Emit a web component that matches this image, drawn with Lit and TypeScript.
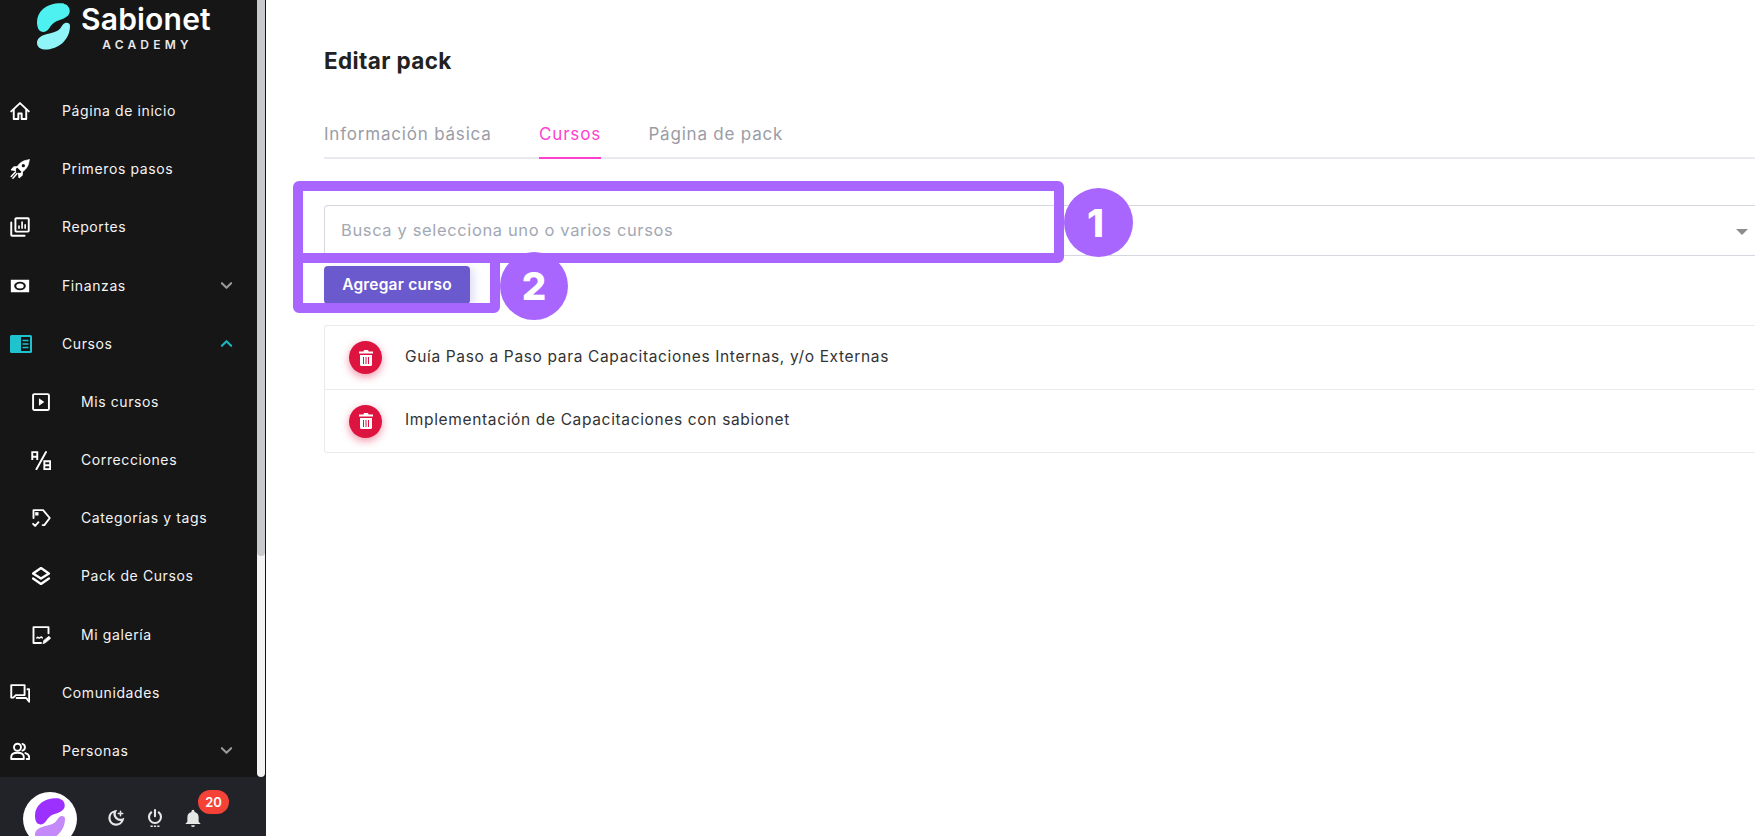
import { LitElement, html, css, svg } from "lit";
import { customElement } from "lit/decorators.js";

const ic = (c: unknown) => html`<svg class="ic" viewBox="0 0 24 24" fill="none" stroke="currentColor" stroke-width="2.3" stroke-linejoin="round" stroke-linecap="round">${c}</svg>`;

const icons: Record<string, unknown> = {
  home: svg`<path d="M1.500 12.500 12 2.500l10.500 10"/><path d="M4.500 10v11.500h5.500v-6.500h4v6.500h5.500V10"/>`,
  rocket: svg`<path d="M23 1c-6.500.5-11 3-14.500 8.500l6 6C20 12 22.500 7.500 23 1z" fill="currentColor" stroke-width="1"/><circle cx="16" cy="8" r="2" fill="#151516" stroke="none"/><path d="M8.500 9.500H5l-3 3.500 4.500.5M14.500 15.500V19l-3.500 3-.5-4.500" stroke-width="1.800" fill="currentColor"/><path d="M6.500 15.500 1.500 21M8.500 17.500 3.500 23" stroke-width="1.800"/>`,
  report: svg`<rect x="6.500" y="1.500" width="16" height="16" rx="1"/><path d="M1.500 6.500v15a1 1 0 0 0 1 1h15"/><path d="M10.800 13.500v-2.500M14.500 13.500V6M18.200 13.500V9.500" stroke-width="2"/>`,
  money: svg`<rect x="1" y="4.500" width="22" height="15" fill="currentColor" stroke="none"/><ellipse cx="12" cy="12" rx="7" ry="5" fill="#151516" stroke="none"/><ellipse cx="12" cy="12" rx="4.500" ry="3" fill="currentColor" stroke="none"/>`,
  play: svg`<rect x="2.500" y="2.500" width="19" height="19" rx="1.500"/><path d="M9.500 7.500l6.500 4.500-6.500 4.500z" fill="currentColor" stroke="none"/>`,
  ab: svg`<path d="M18 2.500 6.500 23" stroke-width="2.300"/><path d="M1.500 12V2.500h6V12M1.500 8h6" stroke-width="2.300" stroke-linejoin="miter" stroke-linecap="butt"/><path d="M16 23v-9.500h7V23zM16 18.200h7" stroke-width="2.300" stroke-linejoin="miter" stroke-linecap="butt"/>`,
  tag: svg`<path d="M3 12V2.500h11.500l8 9.500-6.500 8.500h-2"/><rect x="5" y="5" width="4" height="4" fill="currentColor" stroke="none"/><path d="M2.500 19l2.500 2.500 4-4.500"/>`,
  layers: svg`<path d="M12 2.500 2.500 9l9.500 6 9.500-6z" stroke-width="2.800"/><path d="M2.500 15l9.500 6.500 9.500-6.500" stroke-width="2.800"/>`,
  gallery: svg`<path d="M21 10V2.500H3v19h9"/><path d="M7 15.500c2-2 2 1 3.500 0s1.500-2 3 0" stroke-width="1.800"/><path d="M14.500 22l1-3.500 6-5 2 2.500-6 5z" fill="currentColor" stroke-width="1"/>`,
  chat: svg`<path d="M1.500 2.500h16v12H7l-3 3H1.500z"/><path d="M21 7.500h2v15l-3.500-4.500H8"/>`,
  people: svg`<circle cx="9" cy="7.500" r="4.200"/><path d="M1.500 21.500V19c0-3 3-5 7.500-5s7.500 2 7.500 5v2.500z"/><path d="M15 3.500a4.200 4.200 0 0 1 0 8M18.500 14.500c2.500.8 4.500 2.300 4.500 5v2h-3"/>`,
};

const items = [
  { l: "Página de inicio", i: "home" },
  { l: "Primeros pasos", i: "rocket" },
  { l: "Reportes", i: "report" },
  { l: "Finanzas", i: "money", c: "down" },
  { l: "Cursos", i: "courses", c: "up" },
  { l: "Mis cursos", i: "play", s: 1 },
  { l: "Correcciones", i: "ab", s: 1 },
  { l: "Categorías y tags", i: "tag", s: 1 },
  { l: "Pack de Cursos", i: "layers", s: 1 },
  { l: "Mi galería", i: "gallery", s: 1 },
  { l: "Comunidades", i: "chat" },
  { l: "Personas", i: "people", c: "down" },
];

const coursesIcon = html`<svg class="ic wide" viewBox="0 0 22 18"><rect width="22" height="18" rx="1.500" fill="#1fc2cf"/><rect x="11" y="2" width="9" height="14" fill="#151516"/><path d="M12.500 5.500h6M12.500 9h6M12.500 12.500h6" stroke="#1fc2cf" stroke-width="1.600"/></svg>`;

const chevron = (dir: string) => html`<svg class="chev ${dir}" viewBox="0 0 14 9" fill="none" stroke="currentColor" stroke-width="2.200" stroke-linecap="round" stroke-linejoin="round"><path d=${dir === "up" ? "M2 7l5-5 5 5" : "M2 2l5 5 5-5"}/></svg>`;

const trash = html`<svg class="trash" viewBox="0 0 14 16" fill="#fff"><path d="M5 0h4l.6 1.500H14V3.500H0V1.500h4.400z"/><path fill-rule="evenodd" d="M1 5h12v9.500a1.500 1.500 0 0 1-1.500 1.500h-9A1.500 1.500 0 0 1 1 14.500zM4 7v7h1V7zm2.500 0v7h1V7zM9 7v7h1V7z" /></svg>`;

@customElement("app-root")
export class AppRoot extends LitElement {
  static styles = css`
    :host { display: flex; width: 1755px; height: 836px; overflow: hidden; background: #fff; font-family: "Inter", "Liberation Sans", sans-serif; color: #2b2b2b; }
    * { box-sizing: border-box; }
    .side { width: 266px; height: 836px; display: flex; flex-direction: column; background: #161617; flex: none; position: relative; }
    .thumb { position: absolute; top: 0; left: 257px; width: 8px; height: 777px; background: #f3f3f3; border-radius: 0 0 4px 4px; overflow: hidden; }
    .thumb::after { content: ""; position: absolute; left: 0; right: 0; top: 0; height: 556px; background: #c8c9cc; border-radius: 0 0 4px 4px; }
    .logo { height: 82px; padding: 3px 0 0 37px; display: flex; gap: 11px; flex: none; }
    .logo svg { width: 33px; height: 47px; flex: none; }
    .brand { color: #fff; display: flex; flex-direction: column; align-items: center; }
    .brand b { font-size: 30px; line-height: 32px; font-weight: 600; letter-spacing: 0.2px; }
    .brand span { font-size: 12px; line-height: 14px; font-weight: 600; letter-spacing: 4.200px; margin-top: 3px; color: #e8e8e8; padding-left: 3px; }
    .menu { flex: 1; min-height: 0; display: flex; flex-direction: column; overflow: hidden; }
    .row { flex: 0 0 58.180px; height: 58.180px; display: flex; align-items: center; padding-left: 10px; color: #f3f3f3; font-size: 14px; letter-spacing: 0.6px; position: relative; }
    .row.sub { padding-left: 31px; }
    .row span { padding-bottom: 1px; }
    .ic { width: 20px; height: 20px; flex: none; margin-right: 32px; color: #fff; }
    .row.sub .ic { margin-right: 30px; }
    .ic.wide { width: 22px; height: 18px; margin-right: 30px; }
    .chev { position: absolute; left: 220px; width: 13px; height: 9px; color: #9a9a9a; }
    .chev.up { color: #17b8c4; }
    .foot { height: 59px; flex: none; background: #212328; position: relative; display: flex; align-items: flex-start; }
    .avatar { position: absolute; left: 23px; top: 15px; width: 54px; height: 54px; border-radius: 50%; background: #fff; display: flex; align-items: center; justify-content: center; }
    .avatar svg { width: 30px; height: 43px; }
    .fi { position: absolute; top: 32px; width: 18px; height: 18px; color: #e6e6e6; }
    .fi.moon { left: 107px; }
    .fi.power { left: 146px; }
    .fi.bell { left: 184px; }
    .badge { position: absolute; left: 198px; top: 13px; width: 31px; height: 24px; border-radius: 12px; background: #f44336; color: #fff; font-size: 13px; font-weight: 600; display: flex; align-items: center; justify-content: center; }
    .main { flex: 1; min-width: 0; padding: 47px 0 0 58px; position: relative; display: flex; flex-direction: column; }
    h1 { margin: 0; font-size: 22.500px; line-height: 28px; font-weight: 700; color: #222; letter-spacing: 0.37px; }
    .tabs { display: flex; gap: 47.500px; margin-top: 37px; border-bottom: 2px solid #e9e9ef; height: 47px; color: #9a9ca5; font-size: 17px; letter-spacing: 0.8px; }
    .tab { height: 47px; padding-top: 10px; line-height: 24px; }
    .tab.on { color: #ff3fcf; border-bottom: 2px solid #ff3fcf; }
    .select { margin-top: 46px; height: 51px; border: 1px solid #d6d6e0; border-right: 0; border-radius: 4px 0 0 4px; display: flex; align-items: center; padding: 0 0 2px 16px; color: #a3a8b3; font-size: 16.500px; letter-spacing: 0.63px; position: relative; }
    .caret { position: absolute; right: 7px; top: 23px; width: 0; height: 0; border: 6px solid transparent; border-top: 6px solid #8c8c8c; border-bottom: 0; }
    .btn { margin-top: 10px; width: 146px; height: 38px; border-radius: 4px; background: #6a5acd; color: #fff; font-size: 15.500px; font-weight: 600; display: flex; align-items: center; justify-content: center; padding-bottom: 1px; box-shadow: 4px 2px 8px rgba(106, 90, 205, .2); letter-spacing: 0.2px; }
    .list { margin-top: 21px; border: 1px solid #ebebeb; border-right: 0; border-radius: 3px 0 0 3px; }
    .item { height: 63px; display: flex; align-items: center; padding-left: 24px; font-size: 15.500px; color: #333; letter-spacing: 0.65px; }
    .item + .item { border-top: 1px solid #ebebeb; }
    .item span.t { padding-bottom: 3px; }
    .del { width: 33px; height: 33px; border-radius: 50%; background: #dd1440; box-shadow: 0 3px 8px rgba(221, 20, 64, .45); display: flex; align-items: center; justify-content: center; margin-right: 23px; flex: none; }
    .trash { width: 14px; height: 16px; }
    .mark { position: absolute; border: 10px solid #a866ff; border-radius: 6px; }
    .m1 { left: 27px; top: 181px; width: 771px; height: 82px; }
    .m2 { left: 27px; top: 253px; width: 207px; height: 60px; }
    .num { position: absolute; border-radius: 50%; background: #a866ff; color: #fff; display: flex; align-items: center; justify-content: center; font-size: 38.500px; font-weight: 800; }
    .n1 { left: 798px; top: 188px; width: 69px; height: 69px; padding-right: 6px; }
    .n2 { left: 234px; top: 252px; width: 68px; height: 68px; }
  `;

  logo(a: string, b: string) {
    return html`<svg viewBox="0 0 33 47"><path fill=${a} d="M27 .5C20-.5 11 1.500 6 6 2 9.500 0 14 0 19c0 4 1 8 4 9.500 3 1.200 6 0 8-3 2-3 4-6 8-7.500 4-1.500 10-3 12-7 2-4-.5-9.500-5-10z"/><path fill=${b} d="M33 23c0 7-3 13-8 17.500-5 4-12 6.500-18 6-4-.3-7-3-7-6.500 0-4 3-6.500 7-8 4-1.500 9-2 13-4 3-1.500 4-4 6-6.500 2-2.500 7-2.500 7 1.500z"/></svg>`;
  }

  render() {
    return html`
      <aside class="side">
        <div class="logo">
          ${this.logo("#4ff0f0", "#8ff5f8")}
          <div class="brand"><b>Sabionet</b><span>ACADEMY</span></div>
        </div>
        <nav class="menu">
          ${items.map((it) => html`
            <div class="row ${it.s ? "sub" : ""}">
              ${it.i === "courses" ? coursesIcon : ic(icons[it.i])}
              <span>${it.l}</span>
              ${it.c ? chevron(it.c) : ""}
            </div>`)}
        </nav>
        <div class="foot">
          <div class="avatar">${this.logo("#9b30ff", "#c58af9")}</div>
          <svg class="fi moon" viewBox="0 0 24 24" fill="none" stroke="currentColor" stroke-width="3" stroke-linecap="round"><path d="M11 3a9 9 0 1 0 10 11 8 8 0 0 1-10-11z"/><path d="M18 3v6M15 6h6" stroke-width="2"/></svg>
          <svg class="fi power" viewBox="0 0 24 24" fill="none" stroke="currentColor" stroke-width="2.800" stroke-linecap="round"><path d="M12 1.500v8"/><path d="M7 4.500a8 8 0 1 0 10 0"/><path d="M6 23h12" stroke-dasharray="3 1.500" stroke-linecap="butt" stroke-width="2"/></svg>
          <svg class="fi bell" viewBox="0 0 24 24" fill="currentColor"><path d="M12 24a2.500 2.500 0 0 0 2.500-2.500h-5A2.500 2.500 0 0 0 12 24zm7.500-7V11c0-3.600-2-6.300-5.500-7V3a2 2 0 0 0-4 0v1c-3.500.7-5.500 3.400-5.500 7v6L2 19.500v.500h20v-.500z"/></svg>
          <div class="badge">20</div>
        </div>
        <div class="thumb"></div>
      </aside>
      <main class="main">
        <h1>Editar pack</h1>
        <div class="tabs">
          <div class="tab">Información básica</div>
          <div class="tab on">Cursos</div>
          <div class="tab">Página de pack</div>
        </div>
        <div class="select">Busca y selecciona uno o varios cursos<span class="caret"></span></div>
        <div class="btn">Agregar curso</div>
        <div class="list">
          <div class="item"><span class="del">${trash}</span><span class="t">Guía Paso a Paso para Capacitaciones Internas, y/o Externas</span></div>
          <div class="item"><span class="del">${trash}</span><span class="t">Implementación de Capacitaciones con sabionet</span></div>
        </div>
        <div class="mark m1"></div>
        <div class="mark m2"></div>
        <div class="num n1">1</div>
        <div class="num n2">2</div>
      </main>
    `;
  }
}
